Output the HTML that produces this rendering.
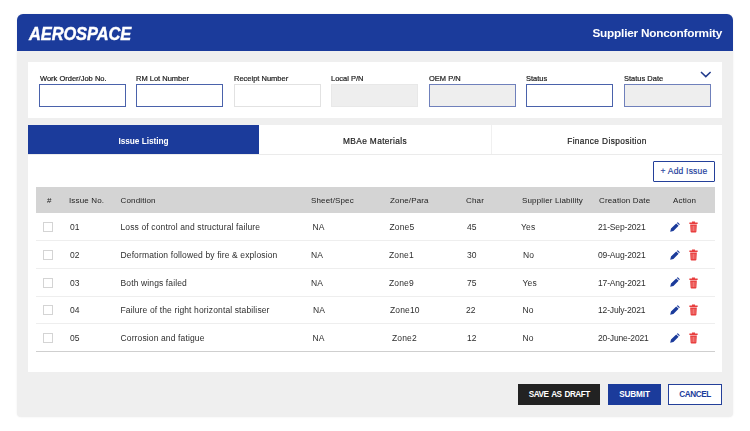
<!DOCTYPE html>
<html><head><meta charset="utf-8">
<style>
*{box-sizing:border-box;margin:0;padding:0}
html,body{width:750px;height:431px;background:#fff;overflow:hidden}
body{font-family:"Liberation Sans","DejaVu Sans",sans-serif;color:#222;position:relative}
.card{position:absolute;left:17px;top:14px;width:716px;height:403px;background:#efefef;border-radius:6px 6px 4px 4px;overflow:hidden;box-shadow:0 0 2px rgba(0,0,0,.08);filter:blur(.35px)}
.hdr{position:absolute;left:0;top:0;width:716px;height:36.5px;background:#1b3b9b}
.logo{position:absolute;left:12px;top:10px;font-size:18.5px;font-weight:bold;font-style:italic;color:#fff;line-height:20px;letter-spacing:-.1px;transform-origin:0 50%;transform:scaleX(.888);-webkit-text-stroke:.45px #fff}
.title{position:absolute;right:11px;top:11px;font-size:11.8px;font-weight:bold;color:#fff;line-height:16px;white-space:nowrap;letter-spacing:-.22px}
.p1{position:absolute;left:11px;top:48.4px;width:694px;height:55.6px;background:#fff}
.f{position:absolute;top:11.6px;-webkit-text-stroke:.2px #222;font-size:7.5px;line-height:9px;color:#222;white-space:nowrap}
.i{position:absolute;top:21.9px;width:86.5px;height:22.4px;border:1px solid #4a62ab;background:#fff}
.i.g{background:#eee;border-color:#6f80bb}
.i.l{border-color:#e2e2e2}
.i.g.l{border-color:#e8e8e8}
.p2{position:absolute;left:11px;top:111px;width:694px;height:247px;background:#fff}
.tabs{position:absolute;left:0;top:0;width:694px;height:30px;border-bottom:1px solid #ebebeb}
.tab{position:absolute;top:0;height:29px;line-height:29px;padding-top:1.5px;text-align:center;font-size:8.3px;letter-spacing:.38px;color:#222;-webkit-text-stroke:.2px #222}
.tab.a{background:#1b3b9b;color:#fff;font-weight:bold;letter-spacing:-.05px;-webkit-text-stroke:0}
.add{position:absolute;left:625px;top:35.5px;width:62px;height:21px;letter-spacing:.2px;-webkit-text-stroke:.15px #1b3b9b;border:1px solid #24409a;border-radius:1px;color:#1b3b9b;font-size:8.5px;line-height:19px;text-align:center;background:#fff}
.th{position:absolute;left:8px;top:62px;width:679px;height:26px;background:#d4d4d4}
.th span,.r span{position:absolute;white-space:nowrap;top:1px}
.th span{font-size:8px;letter-spacing:.15px;line-height:26px;top:1px;color:#222}
.r{position:absolute;left:8px;width:679px;height:28px;border-bottom:1px solid #eeeeee;font-size:8.5px;line-height:27px;color:#2e2e2e;letter-spacing:.13px}
.r .d{letter-spacing:-.15px}
.cb{position:absolute;left:7px;top:9px;width:10px;height:10px;border:1px solid #d4d4d4;background:#fff}
.btn{position:absolute;top:369.5px;height:21px;font-size:8.2px;letter-spacing:-.15px;line-height:22px;text-align:center;font-weight:bold;color:#fff}
</style></head><body>
<div class="card">
 <div class="hdr"><div class="logo">AEROSPACE</div><div class="title">Supplier Nonconformity</div></div>
 <div class="p1">
  <div class="f" style="left:12px">Work Order/Job No.</div><div class="i" style="left:11px"></div>
  <div class="f" style="left:108px">RM Lot Number</div><div class="i" style="left:108px"></div>
  <div class="f" style="left:206px">Receipt Number</div><div class="i l" style="left:206px"></div>
  <div class="f" style="left:303px">Local P/N</div><div class="i g l" style="left:303px"></div>
  <div class="f" style="left:401px">OEM P/N</div><div class="i g" style="left:401px"></div>
  <div class="f" style="left:498px">Status</div><div class="i" style="left:498px"></div>
  <div class="f" style="left:596px">Status Date</div><div class="i g" style="left:596px"></div>
  <svg style="position:absolute;left:672px;top:8.6px" width="12" height="8" viewBox="0 0 12 8"><path d="M1 1 L5.8 5.6 L10.6 1" fill="none" stroke="#213a8c" stroke-width="1.5"/></svg>
 </div>
 <div class="p2">
  <div class="tabs">
   <div class="tab a" style="left:0;width:231px">Issue Listing</div>
   <div class="tab" style="left:231px;width:232px">MBAe Materials</div>
   <div class="tab" style="left:463px;width:231px;border-left:1px solid #f0f0f0">Finance Disposition</div>
  </div>
  <div class="add">+ Add Issue</div>
  <div class="th"><span style="left:11px">#</span><span style="left:33px">Issue No.</span><span style="left:84.5px">Condition</span><span style="left:275px">Sheet/Spec</span><span style="left:354px">Zone/Para</span><span style="left:430px">Char</span><span style="left:486px">Supplier Liability</span><span style="left:563px">Creation Date</span><span style="left:637px">Action</span></div>
  <div class="r" style="top:88px"><i class="cb"></i><span style="left:34px">01</span><span style="left:84.5px">Loss of control and structural failure</span><span style="left:276.5px">NA</span><span style="left:353.5px">Zone5</span><span style="left:431px">45</span><span style="left:485px">Yes</span><span class="d" style="left:562px">21-Sep-2021</span><svg style="position:absolute;left:633.8px;top:8.7px" width="10" height="10" viewBox="0 0 10 10"><path d="M0.2 9.8 L1 6.6 L6.2 1.4 L8.6 3.8 L3.4 9 Z M6.9 0.9 L7.3 0.45 Q7.7 0.05 8.1 0.45 L9.55 1.9 Q9.95 2.3 9.55 2.7 L9.1 3.1 Z" fill="#1b3b9b"/></svg><svg style="position:absolute;left:652.5px;top:8px" width="9" height="12.4" viewBox="0 0 10 13"><path d="M3.3 0.2 H6.7 V1.4 H9.6 V2.9 H0.4 V1.4 H3.3 Z M1.3 3.6 H8.7 L8.2 11.6 Q8.1 12.5 7.2 12.5 H2.8 Q1.9 12.5 1.8 11.6 Z" fill="#e83e3e"/><path d="M3.4 5 V10.8 M5 5 V10.8 M6.6 5 V10.8" stroke="#f4908c" stroke-width=".8" fill="none"/></svg></div>
  <div class="r" style="top:116px"><i class="cb"></i><span style="left:34px">02</span><span style="left:84.5px">Deformation followed by fire &amp; explosion</span><span style="left:275px">NA</span><span style="left:353px">Zone1</span><span style="left:431px">30</span><span style="left:487px">No</span><span class="d" style="left:562px">09-Aug-2021</span><svg style="position:absolute;left:633.8px;top:8.7px" width="10" height="10" viewBox="0 0 10 10"><path d="M0.2 9.8 L1 6.6 L6.2 1.4 L8.6 3.8 L3.4 9 Z M6.9 0.9 L7.3 0.45 Q7.7 0.05 8.1 0.45 L9.55 1.9 Q9.95 2.3 9.55 2.7 L9.1 3.1 Z" fill="#1b3b9b"/></svg><svg style="position:absolute;left:652.5px;top:8px" width="9" height="12.4" viewBox="0 0 10 13"><path d="M3.3 0.2 H6.7 V1.4 H9.6 V2.9 H0.4 V1.4 H3.3 Z M1.3 3.6 H8.7 L8.2 11.6 Q8.1 12.5 7.2 12.5 H2.8 Q1.9 12.5 1.8 11.6 Z" fill="#e83e3e"/><path d="M3.4 5 V10.8 M5 5 V10.8 M6.6 5 V10.8" stroke="#f4908c" stroke-width=".8" fill="none"/></svg></div>
  <div class="r" style="top:143.6px"><i class="cb"></i><span style="left:34px">03</span><span style="left:84.5px">Both wings failed</span><span style="left:275px">NA</span><span style="left:353px">Zone9</span><span style="left:431px">75</span><span style="left:486.5px">Yes</span><span class="d" style="left:562px">17-Ang-2021</span><svg style="position:absolute;left:633.8px;top:8.7px" width="10" height="10" viewBox="0 0 10 10"><path d="M0.2 9.8 L1 6.6 L6.2 1.4 L8.6 3.8 L3.4 9 Z M6.9 0.9 L7.3 0.45 Q7.7 0.05 8.1 0.45 L9.55 1.9 Q9.95 2.3 9.55 2.7 L9.1 3.1 Z" fill="#1b3b9b"/></svg><svg style="position:absolute;left:652.5px;top:8px" width="9" height="12.4" viewBox="0 0 10 13"><path d="M3.3 0.2 H6.7 V1.4 H9.6 V2.9 H0.4 V1.4 H3.3 Z M1.3 3.6 H8.7 L8.2 11.6 Q8.1 12.5 7.2 12.5 H2.8 Q1.9 12.5 1.8 11.6 Z" fill="#e83e3e"/><path d="M3.4 5 V10.8 M5 5 V10.8 M6.6 5 V10.8" stroke="#f4908c" stroke-width=".8" fill="none"/></svg></div>
  <div class="r" style="top:171.3px"><i class="cb"></i><span style="left:34px">04</span><span style="left:84.5px">Failure of the right horizontal stabiliser</span><span style="left:277px">NA</span><span style="left:354px">Zone10</span><span style="left:430px">22</span><span style="left:486.6px">No</span><span class="d" style="left:562px">12-July-2021</span><svg style="position:absolute;left:633.8px;top:8.7px" width="10" height="10" viewBox="0 0 10 10"><path d="M0.2 9.8 L1 6.6 L6.2 1.4 L8.6 3.8 L3.4 9 Z M6.9 0.9 L7.3 0.45 Q7.7 0.05 8.1 0.45 L9.55 1.9 Q9.95 2.3 9.55 2.7 L9.1 3.1 Z" fill="#1b3b9b"/></svg><svg style="position:absolute;left:652.5px;top:8px" width="9" height="12.4" viewBox="0 0 10 13"><path d="M3.3 0.2 H6.7 V1.4 H9.6 V2.9 H0.4 V1.4 H3.3 Z M1.3 3.6 H8.7 L8.2 11.6 Q8.1 12.5 7.2 12.5 H2.8 Q1.9 12.5 1.8 11.6 Z" fill="#e83e3e"/><path d="M3.4 5 V10.8 M5 5 V10.8 M6.6 5 V10.8" stroke="#f4908c" stroke-width=".8" fill="none"/></svg></div>
  <div class="r" style="top:199px;border-bottom-color:#cfcfcf"><i class="cb"></i><span style="left:34px">05</span><span style="left:84.5px">Corrosion and fatigue</span><span style="left:276.5px">NA</span><span style="left:356px">Zone2</span><span style="left:431px">12</span><span style="left:486.6px">No</span><span class="d" style="left:562px">20-June-2021</span><svg style="position:absolute;left:633.8px;top:8.7px" width="10" height="10" viewBox="0 0 10 10"><path d="M0.2 9.8 L1 6.6 L6.2 1.4 L8.6 3.8 L3.4 9 Z M6.9 0.9 L7.3 0.45 Q7.7 0.05 8.1 0.45 L9.55 1.9 Q9.95 2.3 9.55 2.7 L9.1 3.1 Z" fill="#1b3b9b"/></svg><svg style="position:absolute;left:652.5px;top:8px" width="9" height="12.4" viewBox="0 0 10 13"><path d="M3.3 0.2 H6.7 V1.4 H9.6 V2.9 H0.4 V1.4 H3.3 Z M1.3 3.6 H8.7 L8.2 11.6 Q8.1 12.5 7.2 12.5 H2.8 Q1.9 12.5 1.8 11.6 Z" fill="#e83e3e"/><path d="M3.4 5 V10.8 M5 5 V10.8 M6.6 5 V10.8" stroke="#f4908c" stroke-width=".8" fill="none"/></svg></div>
 </div>
 <div class="btn" style="left:501.3px;width:82px;background:#222;letter-spacing:-.5px;word-spacing:1.2px">SAVE AS DRAFT</div>
 <div class="btn" style="left:591px;width:53px;background:#1b3b9b">SUBMIT</div>
 <div class="btn" style="left:651px;width:54px;background:#fff;border:1px solid #24409a;color:#1b3b9b;line-height:20px;letter-spacing:-.4px">CANCEL</div>
</div>
</body></html>
